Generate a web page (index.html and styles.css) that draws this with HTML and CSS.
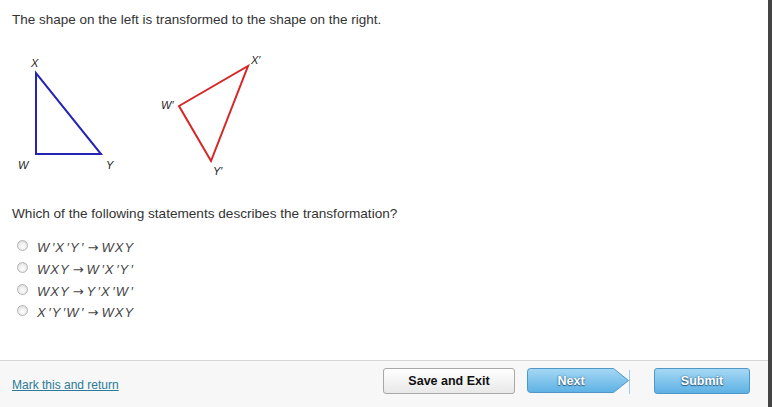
FILE: index.html
```html
<!DOCTYPE html>
<html>
<head>
<meta charset="utf-8">
<link rel="stylesheet" href="styles.css">
</head>
<body>
<div class="page">
  <div class="main">
    <div class="content">
      <p class="prompt">The shape on the left is transformed to the shape on the right.</p>
      <svg class="figure" width="300" height="130" viewBox="0 50 300 130">
        <polygon points="36,73 36,154 101,154" fill="none" stroke="#2424b4" stroke-width="2"/>
        <text x="31" y="67" class="lbl">X</text>
        <text x="18" y="169" class="lbl">W</text>
        <text x="106" y="169" class="lbl">Y</text>
        <polygon points="179,106 248,66 211,161" fill="none" stroke="#d62626" stroke-width="2" stroke-linejoin="miter"/>
        <text x="251" y="64" class="lbl">X′</text>
        <text x="161" y="109" class="lbl">W′</text>
        <text x="213" y="175" class="lbl">Y′</text>
      </svg>
      <p class="question">Which of the following statements describes the transformation?</p>
      <ul class="options">
        <li><span class="radio"></span><span class="math">W ′X ′Y ′<span class="arr">→</span>WXY</span></li>
        <li><span class="radio"></span><span class="math">WXY<span class="arr">→</span>W ′X ′Y ′</span></li>
        <li><span class="radio"></span><span class="math">WXY<span class="arr">→</span>Y ′X ′W ′</span></li>
        <li><span class="radio"></span><span class="math">X ′Y ′W ′<span class="arr">→</span>WXY</span></li>
      </ul>
    </div>
    <div class="footer">
      <a class="mark" href="#">Mark this and return</a>
      <div class="actions">
        <button class="btn save">Save and Exit</button>
        <button class="btn next">
          <svg class="next-shape" width="104" height="26" viewBox="0 0 104 26">
            <defs>
              <linearGradient id="ng" x1="0" y1="0" x2="0" y2="1">
                <stop offset="0" stop-color="#a6d8f4"/>
                <stop offset="1" stop-color="#5db1e4"/>
              </linearGradient>
            </defs>
            <path d="M3.5,0.5 H86.5 L101.5,12.5 L86.5,24.5 H3.5 Q0.5,24.5 0.5,21.5 V3.5 Q0.5,0.5 3.5,0.5 Z" fill="url(#ng)" stroke="#4f97c6"/>
            <line x1="102.5" y1="2" x2="102.5" y2="26" stroke="#9ccbe8"/>
          </svg>
          <span class="next-label">Next</span>
        </button>
        <button class="btn submit">Submit</button>
      </div>
    </div>
  </div>
  <div class="edge"></div>
</div>
</body>
</html>
```
FILE: styles.css
```css
html, body {
  margin: 0;
  padding: 0;
  background: #ffffff;
}
body {
  font-family: "Liberation Sans", Arial, sans-serif;
  color: #333333;
}
.page {
  display: flex;
  width: 772px;
  height: 407px;
}
.main {
  width: 768px;
  display: flex;
  flex-direction: column;
}
.edge {
  width: 4px;
  background: #444444;
}
.content {
  flex: 1;
  padding: 12px 0 0 12px;
}
.prompt {
  margin: 0;
  font-size: 13.5px;
  line-height: 16px;
}
.figure {
  display: block;
  margin: 22px 0 0 -12px;
}
.lbl {
  font-family: "Liberation Sans", Arial, sans-serif;
  font-style: italic;
  font-size: 11px;
  fill: #1e1e1e;
}
.question {
  margin: 26px 0 0 0;
  font-size: 13.6px;
  line-height: 16px;
}
.options {
  list-style: none;
  margin: 15px 0 0 0;
  padding: 0;
}
.options li {
  display: flex;
  align-items: center;
  height: 21.7px;
}
.radio {
  box-sizing: border-box;
  width: 11px;
  height: 11px;
  border-radius: 50%;
  border: 1px solid #b4b4b4;
  background: radial-gradient(circle at 50% 60%, #ffffff 0%, #f0f0f0 45%, #d0d0d0 100%);
  margin: 0 9px 0 5px;
  position: relative;
  top: -2px;
}
.math {
  font-style: italic;
  font-size: 13px;
  letter-spacing: 1px;
  color: #444444;
  white-space: pre;
  word-spacing: -3px;
}
.arr {
  font-family: "DejaVu Sans", sans-serif;
  font-style: normal;
  font-size: 13px;
  letter-spacing: 0;
  margin: 0 3px 0 3px;
}
.footer {
  box-sizing: border-box;
  height: 47px;
  border-top: 1px solid #d6d6d6;
  background: #f7f7f7;
  display: flex;
  align-items: flex-start;
  justify-content: space-between;
  padding: 7px 18px 0 12px;
}
.mark {
  margin-top: 10px;
  font-size: 12px;
  color: #2b7a98;
  text-decoration: underline;
}
.actions {
  display: flex;
}
.btn {
  font-family: "Liberation Sans", Arial, sans-serif;
  font-weight: bold;
  font-size: 12.5px;
  height: 26px;
  padding: 0;
  cursor: pointer;
}
.save {
  width: 132px;
  border: 1px solid #a8a8a8;
  border-radius: 3px;
  background: linear-gradient(#ffffff, #e8e8e8);
  color: #111111;
}
.next {
  position: relative;
  width: 104px;
  margin-left: 12px;
  border: none;
  background: transparent;
  color: #ffffff;
  text-shadow: 0 0 2px #2c5f86, 0 1px 1px #2c5f86;
}
.next-shape {
  position: absolute;
  left: 0;
  top: 0;
}
.next-label {
  position: relative;
  margin-right: 16px;
}
.submit {
  width: 96px;
  margin-left: 23px;
  border: 1px solid #4f97c6;
  border-radius: 3px;
  background: linear-gradient(#a6d8f4, #5db1e4);
  color: #ffffff;
  text-shadow: 0 0 2px #2c5f86, 0 1px 1px #2c5f86;
}
```
